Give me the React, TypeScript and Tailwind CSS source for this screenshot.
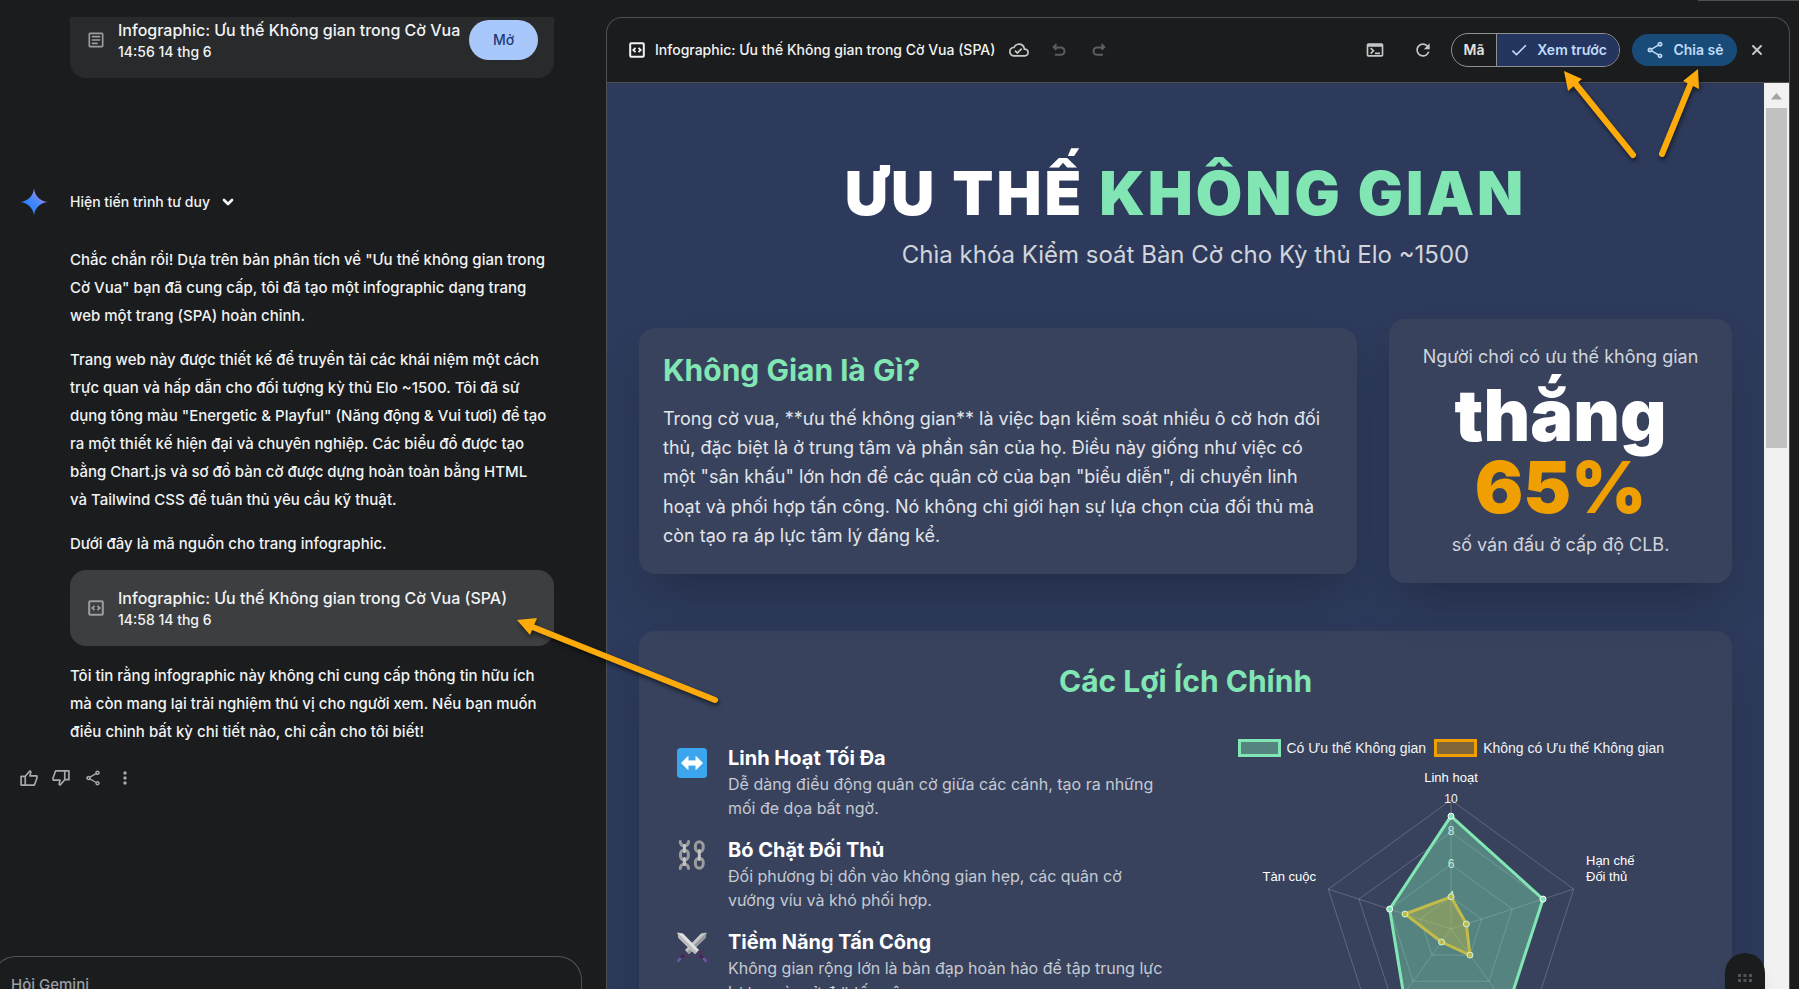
import type { ReactNode } from 'react';
import { ChevronDown, X } from 'lucide-react';
import {
    MdCheck,
    MdMoreVert,
    MdOutlineArticle,
    MdOutlineCloudDone,
    MdOutlineShare,
    MdRefresh,
    MdTerminal,
} from 'react-icons/md';

const CODE_TITLE = 'Infographic: Ưu thế Không gian trong Cờ Vua (SPA)';

// Radar chart: values run from 2 (centre) to 10 (outer ring)
const RADIUS = 129;
const CENTER_Y = 172;
const RINGS = [4, 6, 8, 10];
const WITH_SPACE = [9, 8, 8, 7, 6];
const WITHOUT_SPACE = [4, 3, 4, 3, 5];

function radarPoint(value: number, index: number) {
    const angle = (index * 2 * Math.PI) / 5 - Math.PI / 2;
    const r = ((value - 2) / 8) * RADIUS;
    return { x: r * Math.cos(angle), y: CENTER_Y + r * Math.sin(angle) };
}

function radarPolygon(values: number[]) {
    return values.map((v, i) => { const p = radarPoint(v, i); return `${p.x},${p.y}`; }).join(' ');
}

function CodeBoxIcon({ className }: { className?: string }) {
    return (
        <svg viewBox="0 0 20 20" className={className} fill="none" stroke="currentColor" aria-hidden="true">
            <rect x="3.2" y="3.2" width="13.6" height="13.6" rx="1" strokeWidth="2" />
            <path d="M8.5 7.8 6.3 10l2.2 2.2M11.5 7.8l2.2 2.2-2.2 2.2" strokeWidth="1.8" />
        </svg>
    );
}

function ThumbIcon({ className }: { className?: string }) {
    return (
        <svg viewBox="0 0 24 24" className={className} fill="none" stroke="currentColor" strokeWidth="2" strokeLinejoin="round" aria-hidden="true">
            <path d="M7.5 10 13 3.5l1.2 1.1-1 4.9h8.3v2.8l-3 8.2h-16V10h5zM7.5 10v10.5" />
        </svg>
    );
}

function UndoIcon({ className }: { className?: string }) {
    return (
        <svg viewBox="0 0 20 20" className={className} fill="none" stroke="currentColor" strokeWidth="2" aria-hidden="true">
            <path d="M7.5 4.200 4.700 7l2.800 2.800M4.700 7.500h7.100a3.500 3.500 0 0 1 0 7.300H6" />
        </svg>
    );
}

function SparkIcon() {
    return (
        <svg viewBox="0 0 28 28" className="size-7" aria-hidden="true">
            <defs>
                <linearGradient id="spark" x1="0.15" y1="0.85" x2="0.8" y2="0.15">
                    <stop offset="0" stopColor="#217bfe" />
                    <stop offset="0.55" stopColor="#4489fb" />
                    <stop offset="1" stopColor="#ac87eb" />
                </linearGradient>
            </defs>
            <path d="M14 0.5C15 8 20 13 27.500 14 20 15 15 20 14 27.500 13 20 8 15 0.500 14 8 13 13 8 14 0.500z" fill="url(#spark)" />
        </svg>
    );
}

function ArrowsEmoji() {
    return (
        <svg viewBox="0 0 30 30" className="size-[30px]" aria-hidden="true">
            <rect width="30" height="30" rx="3.5" fill="#3ba5ee" />
            <path d="M4.500 15 11 8.500v4.400h8V8.500L25.500 15 19 21.500v-4.400h-8v4.400z" fill="#fff" stroke="#fff" strokeLinejoin="round" />
        </svg>
    );
}

function ChainsEmoji() {
    return (
        <svg viewBox="0 0 30 30" className="size-[30px]" fill="none" aria-hidden="true">
            <g stroke="#9c9c9c" strokeWidth="3" strokeLinecap="round">
                <path d="M3.200 1.500c.3 3 1.800 4.300 4.200 4.300s3.900-1.300 4.200-4.300M3.200 28.500c.3-3 1.800-4.300 4.200-4.300s3.900 1.300 4.200 4.300" />
                <rect x="3.500" y="10" width="7.800" height="10" rx="3.900" />
                <rect x="18.400" y="1.800" width="7.800" height="10" rx="3.900" />
                <rect x="18.400" y="18.200" width="7.800" height="10" rx="3.900" />
            </g>
            <path d="M7.400 5.500v6M7.400 18.500v6M22.300 10.500v9" stroke="#c4c4c4" strokeWidth="3" strokeLinecap="round" />
        </svg>
    );
}

function SwordsEmoji() {
    return (
        <svg viewBox="0 0 30 30" className="size-[30px]" fill="none" aria-hidden="true">
            <path d="M29.500 0.500 28.500 6 12 22 8 18 24 1.500z" fill="#c4c6c8" />
            <path d="M29.500 0.500 10 20l2 2L28.500 6z" fill="#95979a" />
            <path d="M0.500 0.500 1.500 6 18 22l4-4L6 1.500z" fill="#e0e1e2" />
            <path d="M0.500 0.500 1.500 6 18 22l2-2z" fill="#b9babc" />
            <path d="M5 18.500c0 4 2.500 6.500 6.500 6.500M25 18.500c0 4-2.500 6.500-6.500 6.500" stroke="#55305f" strokeWidth="2.400" />
            <path d="m7 23-5 5M23 23l5 5" stroke="#3d2a52" strokeWidth="2.800" />
            <path d="m3 27-1.500 1.500M27 27l1.500 1.500" stroke="#6d55a0" strokeWidth="3" strokeLinecap="round" />
        </svg>
    );
}

const BENEFITS = [
    { icon: <ArrowsEmoji />, title: 'Linh Hoạt Tối Đa', text: 'Dễ dàng điều động quân cờ giữa các cánh, tạo ra những mối đe dọa bất ngờ.' },
    { icon: <ChainsEmoji />, title: 'Bó Chặt Đối Thủ', text: 'Đối phương bị dồn vào không gian hẹp, các quân cờ vướng víu và khó phối hợp.' },
    { icon: <SwordsEmoji />, title: 'Tiềm Năng Tấn Công', text: 'Không gian rộng lớn là bàn đạp hoàn hảo để tập trung lực lượng và mở đợt tấn công.' },
];

function IconButton({ label, className = '', children }: { label: string; className?: string; children: ReactNode }) {
    return (
        <button type="button" aria-label={label} className={`flex size-5 shrink-0 items-center justify-center ${className}`}>
            {children}
        </button>
    );
}

function ChatColumn() {
    return (
        <section className="flex w-[606px] shrink-0 flex-col overflow-hidden pt-[17px] text-[15px] leading-7 font-medium text-[#f1f3f4]">
            <div className="mr-[52px] ml-[70px] flex shrink-0 items-center gap-3 rounded-b-2xl bg-[#282a2c] px-4 pt-px pb-4">
                <MdOutlineArticle className="size-5 shrink-0 text-[#9a9ea3]" />
                <div className="min-w-0 flex-1 whitespace-nowrap">
                    <h3 className="text-base leading-6">Infographic: Ưu thế Không gian trong Cờ Vua</h3>
                    <p className="text-sm leading-5">14:56 14 thg 6</p>
                </div>
                <button type="button" className="-ml-1 h-10 w-[69px] shrink-0 rounded-full bg-[#a8c7fa] text-sm text-[#1f3b7c]">Mở</button>
            </div>

            <div className="mt-[110px] flex shrink-0">
                <div className="w-[70px] shrink-0 pl-5">
                    <SparkIcon />
                </div>
                <div className="mr-[52px] min-w-0 flex-1">
                    <button type="button" className="mb-[30px] flex items-center gap-[10px] text-sm leading-7">
                        Hiện tiến trình tư duy
                        <ChevronDown className="size-4" strokeWidth={4} />
                    </button>
                    <p className="mb-4 whitespace-nowrap">
                        Chắc chắn rồi! Dựa trên bản phân tích về "Ưu thế không gian trong<br />
                        Cờ Vua" bạn đã cung cấp, tôi đã tạo một infographic dạng trang<br />
                        web một trang (SPA) hoàn chỉnh.
                    </p>
                    <p className="mb-4 whitespace-nowrap">
                        Trang web này được thiết kế để truyền tải các khái niệm một cách<br />
                        trực quan và hấp dẫn cho đối tượng kỳ thủ Elo ~1500. Tôi đã sử<br />
                        dụng tông màu "Energetic &amp; Playful" (Năng động &amp; Vui tươi) để tạo<br />
                        ra một thiết kế hiện đại và chuyên nghiệp. Các biểu đồ được tạo<br />
                        bằng Chart.js và sơ đồ bàn cờ được dựng hoàn toàn bằng HTML<br />
                        và Tailwind CSS để tuân thủ yêu cầu kỹ thuật.
                    </p>
                    <p className="mb-3">Dưới đây là mã nguồn cho trang infographic.</p>
                    <div className="mb-4 flex items-center gap-3 rounded-2xl bg-[#3d3e40] p-4">
                        <CodeBoxIcon className="size-5 shrink-0 text-[#9a9ea3]" />
                        <div className="whitespace-nowrap">
                            <h3 className="text-base leading-6">{CODE_TITLE}</h3>
                            <p className="text-sm leading-5">14:58 14 thg 6</p>
                        </div>
                    </div>
                    <p className="whitespace-nowrap">
                        Tôi tin rằng infographic này không chỉ cung cấp thông tin hữu ích<br />
                        mà còn mang lại trải nghiệm thú vị cho người xem. Nếu bạn muốn<br />
                        điều chỉnh bất kỳ chi tiết nào, chỉ cần cho tôi biết!
                    </p>
                </div>
            </div>

            <div className="mt-[22px] ml-[19px] flex shrink-0 gap-3 text-[#a5aaaf]">
                <IconButton label="Câu trả lời tốt"><ThumbIcon className="size-5" /></IconButton>
                <IconButton label="Câu trả lời chưa tốt"><ThumbIcon className="size-5 rotate-180" /></IconButton>
                <IconButton label="Chia sẻ câu trả lời"><MdOutlineShare className="size-[18px]" /></IconButton>
                <IconButton label="Tùy chọn khác"><MdMoreVert className="size-5" /></IconButton>
            </div>

            <div className="mt-auto mr-6 -ml-2 h-[33px] shrink-0 overflow-hidden rounded-t-3xl border border-b-0 border-[#505356] px-[18px] pt-[14px]">
                <input aria-label="Hỏi Gemini" placeholder="Hỏi Gemini" className="h-7 w-full bg-transparent placeholder:text-[#9a9ea3] focus:outline-none" />
            </div>
        </section>
    );
}

function PanelHeader() {
    return (
        <header className="flex h-[65px] shrink-0 items-center border-b border-[#4d4f50] pr-[22px] pl-5 text-sm font-medium text-[#e3e3e3]">
            <CodeBoxIcon className="size-5 shrink-0 text-[#f1f3f4]" />
            <h2 className="mr-[14px] ml-2 whitespace-nowrap text-[#f1f3f4]">{CODE_TITLE}</h2>
            <MdOutlineCloudDone className="mr-5 size-5 shrink-0 text-[#c4c7c5]" />
            <IconButton label="Hoàn tác" className="mr-5 text-[#5c5f61]"><UndoIcon className="size-5" /></IconButton>
            <IconButton label="Làm lại" className="text-[#5c5f61]"><UndoIcon className="size-5 -scale-x-100" /></IconButton>

            <IconButton label="Bảng điều khiển" className="mr-7 ml-auto text-[#c4c7c5]"><MdTerminal className="size-5" /></IconButton>
            <IconButton label="Tải lại" className="mr-[18px] text-[#c4c7c5]"><MdRefresh className="size-5" /></IconButton>
            <div className="mr-3 flex h-[34px] w-[169px] shrink-0 overflow-hidden rounded-full border border-[#8e918f] font-semibold">
                <button type="button" className="w-[45px] border-r border-[#8e918f]">Mã</button>
                <button type="button" className="flex flex-1 items-center justify-center gap-2 bg-[#243560] text-[#bfdcfa]">
                    <MdCheck className="size-5" />
                    Xem trước
                </button>
            </div>
            <button type="button" className="mr-[10px] flex h-8 w-[105px] shrink-0 items-center justify-center gap-2 rounded-full bg-[#194b78] font-semibold text-[#bfdcfa]">
                <MdOutlineShare className="size-5" />
                Chia sẻ
            </button>
            <IconButton label="Đóng" className="text-[#c4c7c5]"><X className="size-4" strokeWidth={3} /></IconButton>
        </header>
    );
}

function Dataset({ values, color }: { values: number[]; color: string }) {
    return (
        <g>
            <polygon points={radarPolygon(values)} fill={color} fillOpacity="0.4" stroke={color} strokeWidth="3" />
            {values.map((v, i) => {
                const p = radarPoint(v, i);
                return <circle key={i} cx={p.x} cy={p.y} r="3" fill={color} stroke="#fff" />;
            })}
        </g>
    );
}

function RadarChart() {
    return (
        <div className="pt-2 font-['Liberation_Sans',sans-serif] text-sm text-[#f1f3f4]">
            <div className="flex h-[18px] items-center justify-center whitespace-nowrap">
                <span className="mr-[6px] h-[18px] w-[43px] border-3 border-[#81e6b3] bg-[#81e6b3]/40" />
                Có Ưu thế Không gian
                <span className="mr-[6px] ml-2 h-[18px] w-[43px] border-3 border-[#ef9f00] bg-[#ef9f00]/40" />
                Không có Ưu thế Không gian
            </div>
            <svg viewBox="-249 0 498 320" className="mx-auto h-[320px] w-[498px]" aria-label="So sánh có và không có ưu thế không gian">
                <g fill="none" stroke="#fff" strokeOpacity="0.2">
                    {RINGS.map((ring) => (
                        <polygon key={ring} points={radarPolygon([ring, ring, ring, ring, ring])} />
                    ))}
                    {[0, 1, 2, 3, 4].map((i) => {
                        const p = radarPoint(10, i);
                        return <line key={i} x1="0" y1={CENTER_Y} x2={p.x} y2={p.y} />;
                    })}
                </g>
                <g fill="#f1f3f4" fontSize="12" textAnchor="middle">
                    <text x="0" y="46">10</text>
                    <text x="0" y="78">8</text>
                    <text x="0" y="111">6</text>
                    <text x="0" y="143">4</text>
                </g>
                <g fill="#fff" fontSize="13">
                    <text x="0" y="25" textAnchor="middle">Linh hoạt</text>
                    <text x="135" y="108">Hạn chế</text>
                    <text x="135" y="124">Đối thủ</text>
                    <text x="-135" y="124" textAnchor="end">Tàn cuộc</text>
                </g>
                <Dataset values={WITHOUT_SPACE} color="#ef9f00" />
                <Dataset values={WITH_SPACE} color="#81e6b3" />
            </svg>
        </div>
    );
}

function Infographic() {
    return (
        <main className="min-w-0 flex-1 overflow-hidden bg-[#2d3a5b] px-8 pt-20 text-[#e2e5ea]">
            <header className="mb-12 text-center">
                <h1 className="text-6xl leading-none font-black tracking-wider text-white">
                    ƯU THẾ <span className="text-[#81e6b3]">KHÔNG GIAN</span>
                </h1>
                <p className="mt-4 text-2xl text-[#d1d5db]">Chìa khóa Kiểm soát Bàn Cờ cho Kỳ thủ Elo ~1500</p>
            </header>

            <div className="mb-12 grid grid-cols-3 items-center gap-8">
                <article className="col-span-2 rounded-2xl bg-[#38425d] p-6 shadow-2xl">
                    <h2 className="mb-4 text-3xl leading-9 font-bold text-[#81e6b3]">Không Gian là Gì?</h2>
                    <p className="text-lg leading-relaxed">
                        Trong cờ vua, **ưu thế không gian** là việc bạn kiểm soát nhiều ô cờ hơn đối thủ, đặc biệt là ở trung tâm và phần sân của họ. Điều này giống như việc có một "sân khấu" lớn hơn để các quân cờ của bạn "biểu diễn", di chuyển linh hoạt và phối hợp tấn công. Nó không chỉ giới hạn sự lựa chọn của đối thủ mà còn tạo ra áp lực tâm lý đáng kể.
                    </p>
                </article>
                <article className="rounded-2xl bg-[#38425d] p-6 text-center shadow-2xl">
                    <p className="text-lg leading-7 text-[#d1d5db]">Người chơi có ưu thế không gian</p>
                    <p className="my-2 text-7xl leading-none font-black text-white">
                        thắng <span className="block text-[#ef9f00]">65%</span>
                    </p>
                    <p className="text-lg leading-7 text-[#d1d5db]">số ván đấu ở cấp độ CLB.</p>
                </article>
            </div>

            <section className="rounded-2xl bg-[#38425d] p-8 shadow-2xl">
                <h2 className="mb-8 text-center text-3xl leading-9 font-bold text-[#81e6b3]">Các Lợi Ích Chính</h2>
                <div className="grid grid-cols-2 gap-8">
                    <ul className="space-y-4 pt-[13px]">
                        {BENEFITS.map((item) => (
                            <li key={item.title} className="flex gap-4">
                                <span className="flex w-[41px] shrink-0 justify-center pt-1">{item.icon}</span>
                                <div>
                                    <h3 className="text-xl leading-7 font-bold text-white">{item.title}</h3>
                                    <p className="text-base text-[#c5cad3]">{item.text}</p>
                                </div>
                            </li>
                        ))}
                    </ul>
                    <RadarChart />
                </div>
            </section>
        </main>
    );
}

function ScrollTrack() {
    return (
        <div className="flex w-[25px] shrink-0 flex-col items-center bg-[#f1f1f1]">
            <svg viewBox="0 0 25 25" className="size-[25px] shrink-0" aria-hidden="true">
                <path d="M7 16.500 12.500 10l5.500 6.500z" fill="#a3a3a3" />
            </svg>
            <div className="h-[340px] w-[21px] bg-[#c1c1c1]" />
        </div>
    );
}

// Hand-drawn pointers laid over the whole window
function Pointers() {
    return (
        <svg viewBox="0 0 1799 989" className="pointer-events-none absolute top-0 left-0 h-[989px] w-[1799px] drop-shadow-[1px_3px_2px_rgba(0,0,0,0.5)]" aria-hidden="true">
            <path d="M1633 155 1574 82M1662 154l29-71M715 700 530 626" stroke="#fcab0a" strokeWidth="6" strokeLinecap="round" />
            <path d="M1564 71l18 8-14 12zM1698 69l-15 12 16 8zM517 620l20-2-7 17z" fill="#fcab0a" />
        </svg>
    );
}

export default function App() {
    return (
        <div className="relative flex h-screen overflow-hidden bg-[#1b1c1d] font-['Inter',sans-serif]">
            <ChatColumn />
            <section className="mt-[17px] mr-[9px] flex min-w-0 flex-1 flex-col overflow-hidden rounded-t-2xl border border-b-0 border-[#4d4f50]">
                <PanelHeader />
                <div className="flex min-h-0 flex-1">
                    <Infographic />
                    <ScrollTrack />
                </div>
            </section>
            <div className="absolute top-0 right-0 h-px w-[101px] bg-[#4d4f50]" />
            <button type="button" aria-label="Mở bảng công cụ" className="absolute right-[34px] bottom-0 flex h-9 w-10 justify-center rounded-t-full bg-[#1b1c1d] pt-5 shadow-lg">
                <svg viewBox="0 0 14 10" className="h-[10px] w-[14px]" fill="#505356" aria-hidden="true">
                    <path d="M0 1h3v3H0zM5.500 1h3v3h-3zM11 1h3v3h-3zM0 6h3v3H0zM5.500 6h3v3h-3zM11 6h3v3h-3z" />
                </svg>
            </button>
            <Pointers />
        </div>
    );
}
